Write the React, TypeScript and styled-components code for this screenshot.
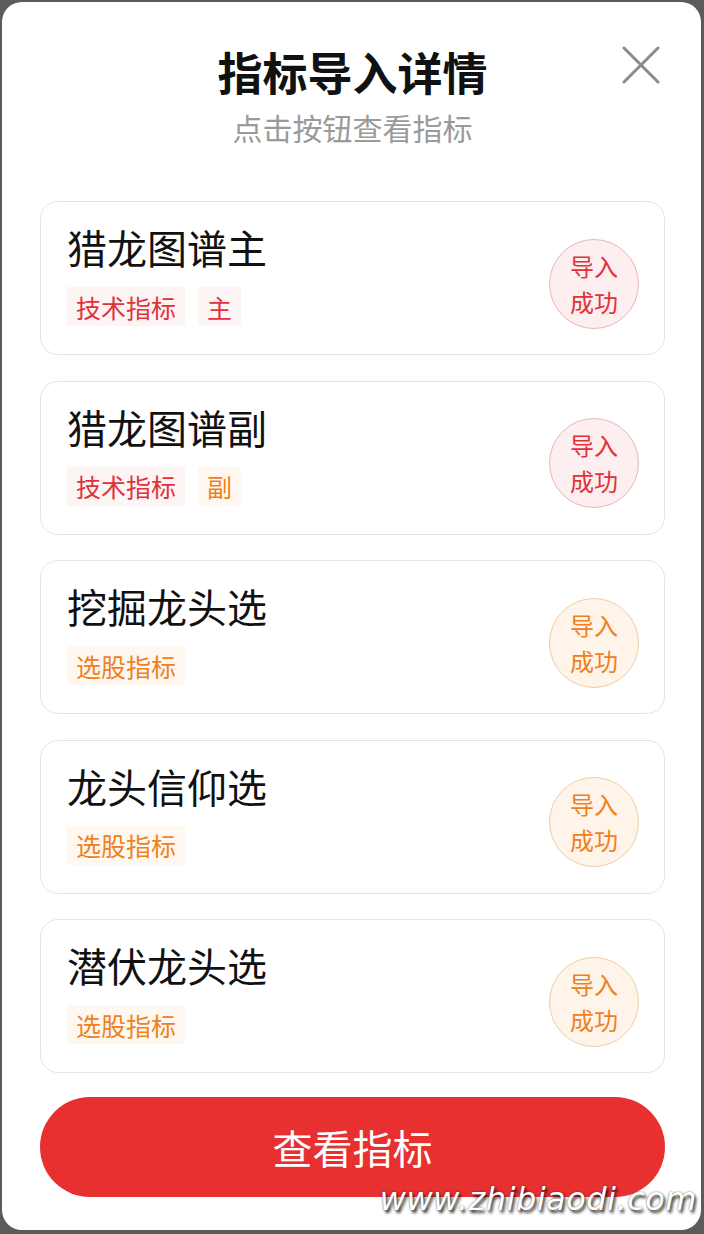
import React from "react";
import styled, { createGlobalStyle } from "styled-components";

const Global = createGlobalStyle`
  html, body { margin: 0; padding: 0; }
  body {
    background: #5b5b5b;
    font-family: "Noto Sans CJK SC", "Noto Sans", sans-serif;
  }
`;

type Tone = "red" | "orange";

const palette = {
  red: { text: "#e2313a", tagBg: "#fdf4f4", badgeBg: "#fdeeef", border: "#eab4bb" },
  orange: { text: "#f0801e", tagBg: "#fff8f0", badgeBg: "#fef4e9", border: "#f0cca6" },
};

const Screen = styled.div`
  width: 704px;
  height: 1234px;
  padding: 2px 3px 4px 2px;
  box-sizing: border-box;
`;

const Modal = styled.div`
  position: relative;
  height: 100%;
  background: #ffffff;
  border-radius: 20px;
  box-sizing: border-box;
  padding: 41px 36px 0 38px;
  display: flex;
  flex-direction: column;
`;

const Header = styled.header`
  display: flex;
  flex-direction: column;
  align-items: center;
  margin-bottom: 54px;
`;

const Title = styled.h1`
  margin: 0;
  font-size: 45px;
  line-height: 57px;
  font-weight: 700;
  color: #111;
`;

const Subtitle = styled.p`
  margin: 8px 0 0;
  font-size: 30px;
  line-height: 39px;
  color: #9a9a9a;
`;

const CloseButton = styled.button`
  position: absolute;
  top: 44px;
  right: 41px;
  width: 38px;
  height: 38px;
  padding: 0;
  border: none;
  background: transparent;
  display: flex;
  align-items: center;
  justify-content: center;
`;

const List = styled.div`
  display: flex;
  flex-direction: column;
  gap: 25.5px;
`;

const Card = styled.div`
  display: flex;
  align-items: center;
  justify-content: space-between;
  height: 154px;
  box-sizing: border-box;
  border: 1px solid #e4e4e4;
  border-radius: 18px;
  padding: 0 25px 0 26px;
`;

const Info = styled.div`
  display: flex;
  flex-direction: column;
  gap: 18px;
  margin-bottom: 5px;
`;

const Name = styled.div`
  font-size: 40px;
  line-height: 44px;
  color: #111;
`;

const Tags = styled.div`
  display: flex;
  gap: 13px;
`;

const Tag = styled.span<{ $tone: Tone }>`
  display: inline-flex;
  align-items: center;
  height: 39px;
  padding: 0 9px;
  font-size: 25px;
  color: ${(p) => palette[p.$tone].text};
  background: ${(p) => palette[p.$tone].tagBg};
`;

const Badge = styled.div<{ $tone: Tone }>`
  width: 90px;
  height: 90px;
  margin-top: 11px;
  box-sizing: border-box;
  border-radius: 50%;
  border: 1px solid ${(p) => palette[p.$tone].border};
  background: ${(p) => palette[p.$tone].badgeBg};
  color: ${(p) => palette[p.$tone].text};
  font-size: 24px;
  line-height: 36px;
  display: flex;
  align-items: center;
  justify-content: center;
  text-align: center;
`;

const PrimaryButton = styled.button`
  margin-top: 24px;
  height: 100px;
  width: 100%;
  border: none;
  border-radius: 50px;
  background: #e83031;
  color: #fff;
  font-family: "Noto Sans CJK SC", sans-serif;
  font-size: 40px;
`;

const Watermark = styled.div`
  position: absolute;
  right: 4px;
  bottom: 12px;
  font-family: "DejaVu Sans", sans-serif;
  font-style: italic;
  font-size: 32px;
  letter-spacing: 0.5px;
  color: #ffffff;
  text-shadow: 2px 3px 3px rgba(0, 0, 0, 0.75), 0 0 2px rgba(0, 0, 0, 0.6);
`;

type Item = { name: string; tags: { label: string; tone: Tone }[]; tone: Tone };

const items: Item[] = [
  { name: "猎龙图谱主", tags: [{ label: "技术指标", tone: "red" }, { label: "主", tone: "red" }], tone: "red" },
  { name: "猎龙图谱副", tags: [{ label: "技术指标", tone: "red" }, { label: "副", tone: "orange" }], tone: "red" },
  { name: "挖掘龙头选", tags: [{ label: "选股指标", tone: "orange" }], tone: "orange" },
  { name: "龙头信仰选", tags: [{ label: "选股指标", tone: "orange" }], tone: "orange" },
  { name: "潜伏龙头选", tags: [{ label: "选股指标", tone: "orange" }], tone: "orange" },
];

export default function App() {
  return (
    <Screen>
      <Global />
      <Modal>
        <CloseButton aria-label="关闭">
          <svg width="38" height="38" viewBox="0 0 38 38">
            <path d="M2 2 L36 36 M36 2 L2 36" stroke="#8a8a8a" strokeWidth="3" strokeLinecap="round" />
          </svg>
        </CloseButton>
        <Header>
          <Title>指标导入详情</Title>
          <Subtitle>点击按钮查看指标</Subtitle>
        </Header>
        <List>
          {items.map((it) => (
            <Card key={it.name}>
              <Info>
                <Name>{it.name}</Name>
                <Tags>
                  {it.tags.map((t) => (
                    <Tag key={t.label} $tone={t.tone}>{t.label}</Tag>
                  ))}
                </Tags>
              </Info>
              <Badge $tone={it.tone}>导入<br />成功</Badge>
            </Card>
          ))}
        </List>
        <PrimaryButton>查看指标</PrimaryButton>
        <Watermark>www.zhibiaodi.com</Watermark>
      </Modal>
    </Screen>
  );
}
